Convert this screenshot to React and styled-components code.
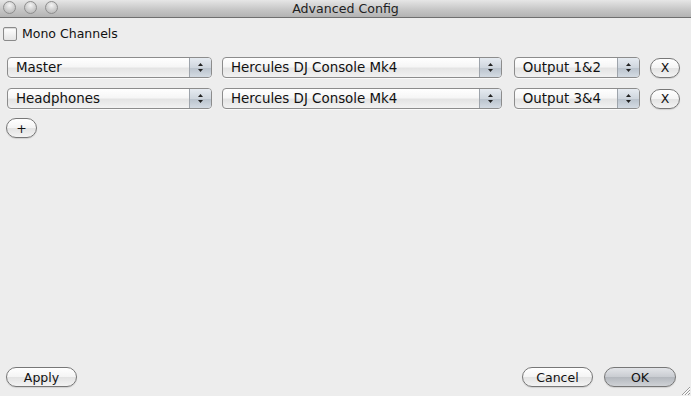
import styled, { createGlobalStyle } from "styled-components"

const Global = createGlobalStyle`
  html, body { margin: 0; padding: 0; }
  body {
    font-family: "DejaVu Sans", "Liberation Sans", sans-serif;
    font-size: 12px;
    color: #111;
  }
`

const Arrows = () => (
  <svg width="7" height="11" viewBox="0 0 7 11">
    <path d="M3.5 1 L6 4 L1 4 Z" fill="#222" />
    <path d="M3.5 10 L6 7 L1 7 Z" fill="#222" />
  </svg>
)

function Select({ label, width }) {
  return (
    <SelectBox $width={width}>
      <SelectLabel>{label}</SelectLabel>
      <Stepper>
        <Arrows />
      </Stepper>
    </SelectBox>
  )
}

const rows = [
  { channel: "Master", device: "Hercules DJ Console Mk4", output: "Output 1&2" },
  { channel: "Headphones", device: "Hercules DJ Console Mk4", output: "Output 3&4" },
]

export default function App() {
  return (
    <Window>
      <Global />
      <TitleBar>
        <Lights>
          <Light />
          <Light />
          <Light />
        </Lights>
        <Title>Advanced Config</Title>
      </TitleBar>

      <Body>
        <CheckRow>
          <Checkbox />
          <span>Mono Channels</span>
        </CheckRow>

        <Rows>
          {rows.map((r) => (
            <Row key={r.channel}>
              <Select label={r.channel} width={206} />
              <Select label={r.device} width={281} />
              <Select label={r.output} width={127} />
              <RoundButton $width={30}>X</RoundButton>
            </Row>
          ))}
        </Rows>

        <AddRow>
          <RoundButton $width={31}>+</RoundButton>
        </AddRow>

        <Footer>
          <RoundButton $width={71}>Apply</RoundButton>
          <FooterRight>
            <RoundButton $width={71}>Cancel</RoundButton>
            <RoundButton $width={72} $primary>
              OK
            </RoundButton>
          </FooterRight>
        </Footer>
      </Body>
      <Grip>
        <svg width="10" height="10" viewBox="0 0 10 10">
          <path d="M2 10 L10 2 M5 10 L10 5 M8 10 L10 8" stroke="#9a9a9a" strokeWidth="1" />
          <path d="M3 10 L10 3 M6 10 L10 6" stroke="#fff" strokeWidth="1" />
        </svg>
      </Grip>
    </Window>
  )
}

const Window = styled.div`
  position: relative;
  width: 691px;
  height: 396px;
  display: flex;
  flex-direction: column;
  background: #ededed;
  overflow: hidden;
`

const TitleBar = styled.div`
  position: relative;
  height: 17px;
  flex: none;
  display: flex;
  align-items: center;
  justify-content: center;
  background: linear-gradient(#e6e6e6, #c4c4c4 60%, #b3b3b3);
  border-bottom: 1px solid #6f6f6f;
`

const Lights = styled.div`
  position: absolute;
  left: 3px;
  top: 1px;
  display: flex;
  gap: 8px;
`

const Light = styled.div`
  width: 13px;
  height: 13px;
  border-radius: 50%;
  box-sizing: border-box;
  border: 1px solid #8e8e8e;
  background: radial-gradient(circle at 50% 30%, #f4f4f4, #cdcdcd 55%, #b2b2b2);
`

const Title = styled.div`
  font-size: 12.6px;
  color: #222;
`

const Body = styled.div`
  flex: 1;
  display: flex;
  flex-direction: column;
  padding: 8px 11px 9px 6px;
`

const CheckRow = styled.div`
  display: flex;
  align-items: center;
  gap: 5px;
  margin-left: -3px;
  font-size: 12.5px;
`

const Checkbox = styled.div`
  width: 14px;
  height: 14px;
  box-sizing: border-box;
  border: 1px solid #8a8a8a;
  border-radius: 2px;
  background: linear-gradient(#ffffff, #e4e4e4);
  box-shadow: inset 0 1px 1px rgba(0, 0, 0, 0.15);
`

const Rows = styled.div`
  display: flex;
  flex-direction: column;
  gap: 10px;
  margin-top: 16px;
  margin-left: 1px;
`

const Row = styled.div`
  display: flex;
  align-items: center;
  gap: 10px;
`

const SelectBox = styled.div`
  width: ${(p) => p.$width}px;
  height: 21px;
  box-sizing: border-box;
  display: flex;
  border: 1px solid #8c8c8c;
  border-radius: 4px;
  background: linear-gradient(#ffffff, #f6f6f6 45%, #e4e4e4 55%, #f2f2f2);
  box-shadow: 0 1px 0 rgba(255, 255, 255, 0.7);
  overflow: hidden;
  & + & + & {
    margin-left: 2px;
  }
`

const SelectLabel = styled.div`
  flex: 1;
  padding-left: 8px;
  font-size: 13.4px;
  line-height: 19px;
  white-space: nowrap;
  overflow: hidden;
`

const Stepper = styled.div`
  width: 21px;
  display: flex;
  align-items: center;
  justify-content: center;
  border-left: 1px solid #9ea4ab;
  background: linear-gradient(#e6ebf1, #cfd6de 50%, #b9c2cc 51%, #d4dbe3);
`

const RoundButton = styled.div`
  width: ${(p) => p.$width}px;
  height: 20px;
  box-sizing: border-box;
  display: flex;
  align-items: center;
  justify-content: center;
  border: 1px solid #777;
  border-radius: 10px;
  font-size: 12.5px;
  background: ${(p) =>
    p.$primary
      ? "linear-gradient(#e2e4e8, #c9ccd1 50%, #b4b8be 52%, #cfd2d6)"
      : "linear-gradient(#ffffff, #f4f4f4 50%, #e3e3e3 52%, #f3f3f3)"};
  box-shadow: 0 1px 1px rgba(0, 0, 0, 0.12);
`

const AddRow = styled.div`
  display: flex;
  margin-top: 9px;
`

const Footer = styled.div`
  margin-top: auto;
  display: flex;
  justify-content: space-between;
  align-items: center;
`

const FooterRight = styled.div`
  display: flex;
  gap: 11px;
  margin-right: 4px;
`

const Grip = styled.div`
  position: absolute;
  right: 1px;
  bottom: 1px;
  line-height: 0;
`
